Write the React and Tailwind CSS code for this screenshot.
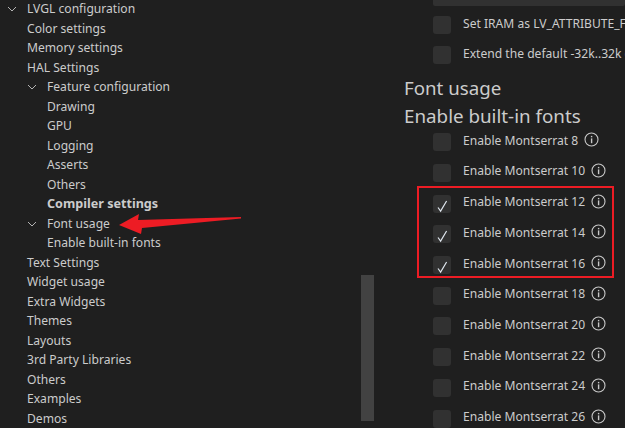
import React from "react";

const treeRows = [
  { label: "LVGL configuration", level: 0, open: true },
  { label: "Color settings", level: 0 },
  { label: "Memory settings", level: 0 },
  { label: "HAL Settings", level: 0 },
  { label: "Feature configuration", level: 1, open: true },
  { label: "Drawing", level: 1 },
  { label: "GPU", level: 1 },
  { label: "Logging", level: 1 },
  { label: "Asserts", level: 1 },
  { label: "Others", level: 1 },
  { label: "Compiler settings", level: 1, bold: true },
  { label: "Font usage", level: 1, open: true },
  { label: "Enable built-in fonts", level: 1 },
  { label: "Text Settings", level: 0 },
  { label: "Widget usage", level: 0 },
  { label: "Extra Widgets", level: 0 },
  { label: "Themes", level: 0 },
  { label: "Layouts", level: 0 },
  { label: "3rd Party Libraries", level: 0 },
  { label: "Others", level: 0 },
  { label: "Examples", level: 0 },
  { label: "Demos", level: 0 },
];

const fontSizes = [8, 10, 12, 14, 16, 18, 20, 22, 24, 26];
const checkedSizes = [12, 14, 16];

const Chevron = () => (
  <svg width="10" height="6" viewBox="0 0 10 6" fill="none" stroke="#b4b4b4" strokeWidth="1" className="absolute left-[-20px] top-[7px]">
    <path d="M1 1l4 4 4-4" />
  </svg>
);

const InfoIcon = () => (
  <svg width="15" height="15" viewBox="0 0 15 15" fill="none" className="shrink-0">
    <circle cx="7.5" cy="7.5" r="6.5" stroke="#c8c8c8" strokeWidth="1.1" />
    <rect x="6.9" y="3.9" width="1.4" height="1.4" fill="#c8c8c8" />
    <rect x="6.9" y="6.4" width="1.4" height="4.8" fill="#c8c8c8" />
  </svg>
);

const CheckBox = ({ checked }) => (
  <div className="w-[18px] h-[18px] shrink-0 rounded-[3px] bg-[#313131] relative">
    {checked && (
      <svg width="18" height="18" viewBox="0 0 18 18" fill="none" className="absolute left-0 top-[1px]">
        <path d="M5 11.5l2.6 3.6L13.6 5" stroke="#dfe6ee" strokeWidth="1.2" />
      </svg>
    )}
  </div>
);

const OptionRow = ({ label, checked, info, className }) => (
  <div className={`flex items-center ${className}`}>
    <CheckBox checked={checked} />
    <span className={`ml-[12px] text-[12.1px] whitespace-nowrap ${info ? "-mt-[3px]" : "-mt-[1px]"}`}>{label}</span>
    {info && <span className="ml-[6px] flex -mt-[5px]"><InfoIcon /></span>}
  </div>
);

const App = () => {
  return (
    <div
      className="relative w-[625px] h-[428px] overflow-hidden bg-[#1f1f1f] text-[#cccccc] flex"
      style={{ fontFamily: '"Noto Sans", "Open Sans", sans-serif' }}
    >
      <div className="w-[404px] shrink-0 pl-[27px] -mt-[1px]">
        {treeRows.map((row, i) => (
          <div
            key={i}
            className={`h-[19.5px] leading-[19.5px] whitespace-nowrap relative ${row.level === 1 ? "ml-[20px]" : ""} ${row.bold ? "font-bold text-[12.6px]" : "text-[12.1px]"}`}
          >
            {row.open && <Chevron />}
            {row.label}
          </div>
        ))}
      </div>

      <div className="flex-1 min-w-0">
        <div className="ml-[29px] h-[6px] rounded-b-[2px] bg-[#313131]" />
        <OptionRow className="ml-[29px] mt-[10px]" label="Set IRAM as LV_ATTRIBUTE_FAST_MEM" />
        <OptionRow className="ml-[29px] mt-[12px]" label="Extend the default -32k..32k coordinate range" />
        <div className="mt-[13px] text-[18.7px] leading-[22px] whitespace-nowrap">Font usage</div>
        <div className="mt-[6px] text-[18.8px] leading-[22px] whitespace-nowrap">Enable built-in fonts</div>
        <div>
          {fontSizes.map((size) => (
            <OptionRow
              key={size}
              className="ml-[29px] h-[30.7px]"
              label={`Enable Montserrat ${size}`}
              checked={checkedSizes.includes(size)}
              info
            />
          ))}
        </div>
      </div>

      <div className="absolute left-[361px] top-[275px] w-[13px] h-[146px] bg-[#424242]" />
      <div className="absolute left-[417px] top-[186px] w-[197px] h-[92px] border-2 border-[#ed1c24]" />
      <svg width="125" height="22" viewBox="0 0 125 22" className="absolute left-[119px] top-[214px]">
        <path d="M0 11L20 0l-1 6L122 3v1.500L23 14l-1 6z" fill="#ed1c24" />
      </svg>
    </div>
  );
};

export default App;
